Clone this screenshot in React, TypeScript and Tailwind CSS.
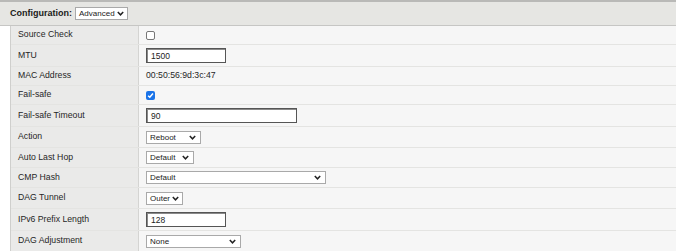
import React from "react";

const font = { fontFamily: '"Liberation Sans", Arial, sans-serif' };

function Chevron() {
  return (
    <svg width="7" height="5" viewBox="0 0 7 5" className="shrink-0">
      <path d="M0.8 1 L3.5 3.8 L6.2 1" fill="none" stroke="#222" strokeWidth="1.5" />
    </svg>
  );
}

function Select({ value, w }: { value: string; w: string }) {
  return (
    <div
      className={`flex h-[13px] items-center justify-between gap-[2px] border border-[#a9a9a9] bg-white pl-[3px] pr-[4px] text-[8px] leading-none text-[#222] ${w}`}
    >
      <span className="pt-[1px]">{value}</span>
      <Chevron />
    </div>
  );
}

function TextInput({ value, w }: { value: string; w: string }) {
  return (
    <div
      className={`flex h-[15px] items-center border border-[#555] bg-white pl-[4px] text-[8.5px] leading-none text-[#222] shadow-[inset_1px_1px_0_#8a8a8a] ${w}`}
    >
      <span className="pt-[1px]">{value}</span>
    </div>
  );
}

function Row({ label, h, children }: { label: string; h: string; children: React.ReactNode }) {
  return (
    <div className={`flex border-b border-[#e4e4e2] ${h}`}>
      <div className="flex w-[128px] shrink-0 items-center border-r border-[#d4d4d2] bg-[#eaeae9] pl-[7px] text-[8.7px] text-[#262626]">
        {label}
      </div>
      <div className="flex flex-1 items-center bg-[#f6f6f6] pl-[7px] text-[8.7px] text-[#262626]">{children}</div>
    </div>
  );
}

export default function App() {
  return (
    <div className="h-[251px] w-[682px] overflow-hidden bg-white" style={font}>
      <div className="w-[676px]">
        <div className="flex h-[26px] items-center gap-[3px] border-t-2 border-b border-t-[#b9b9b7] border-b-[#c6c6c4] bg-[#e6e6e3] pl-[10px]">
          <span className="text-[9px] font-bold text-[#1a1a1a]">Configuration:</span>
          <Select value="Advanced" w="w-[53px]" />
        </div>
        <div className="ml-[10px] border-l border-[#cfcfcd]">
          <Row label="Source Check" h="h-[19px]">
            <div className="h-[9px] w-[9px] rounded-[2px] border border-[#777] bg-white" />
          </Row>
          <Row label="MTU" h="h-[22px]">
            <TextInput value="1500" w="w-[80px]" />
          </Row>
          <Row label="MAC Address" h="h-[19px]">
            00:50:56:9d:3c:47
          </Row>
          <Row label="Fail-safe" h="h-[19px]">
            <div className="flex h-[9px] w-[9px] items-center justify-center rounded-[2px] bg-[#1a73e8]">
              <svg width="7" height="7" viewBox="0 0 8 8">
                <path d="M1.3 4.2 L3.2 6 L6.8 1.8" fill="none" stroke="#fff" strokeWidth="1.7" />
              </svg>
            </div>
          </Row>
          <Row label="Fail-safe Timeout" h="h-[22px]">
            <TextInput value="90" w="w-[151px]" />
          </Row>
          <Row label="Action" h="h-[21px]">
            <Select value="Reboot" w="w-[55px]" />
          </Row>
          <Row label="Auto Last Hop" h="h-[20px]">
            <Select value="Default" w="w-[48px]" />
          </Row>
          <Row label="CMP Hash" h="h-[20px]">
            <Select value="Default" w="w-[180px]" />
          </Row>
          <Row label="DAG Tunnel" h="h-[21px]">
            <Select value="Outer" w="w-[37px]" />
          </Row>
          <Row label="IPv6 Prefix Length" h="h-[22px]">
            <TextInput value="128" w="w-[80px]" />
          </Row>
          <Row label="DAG Adjustment" h="h-[21px]">
            <Select value="None" w="w-[95px]" />
          </Row>
        </div>
      </div>
    </div>
  );
}
